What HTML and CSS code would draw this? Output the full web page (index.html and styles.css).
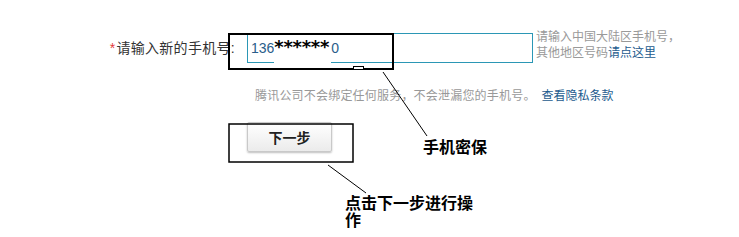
FILE: index.html
```html
<!DOCTYPE html>
<html lang="zh-CN">
<head>
    <meta charset="UTF-8">
    <title>设置密保手机</title>
    <link rel="stylesheet" href="styles.css">
</head>
<body>
    <div id="page">
        <div class="form-row">
            <div class="form-label"><span class="required">*</span>请输入新的手机号:</div>
            <div class="phone-input">
                <span class="phone-part">136</span>
                <span class="phone-mask">******</span>
                <span class="phone-part">0</span>
            </div>
            <div class="form-hint">
                请输入中国大陆区手机号，<br>
                其他地区号码<a href="#">请点这里</a>
            </div>
        </div>

        <div class="privacy-row">
            <span class="privacy-text">腾讯公司不会绑定任何服务，不会泄漏您的手机号。</span><a href="#">查看隐私条款</a>
        </div>

        <div class="button-row">
            <button class="btn-next">下一步</button>
        </div>

        <!-- 标注层 -->
        <svg class="notes" width="739" height="237" viewBox="0 0 739 237">
            <rect x="229" y="34" width="164" height="35" fill="none" stroke="#000" stroke-width="2"/>
            <rect x="353.5" y="66.5" width="10" height="3" fill="#fff" stroke="#000" stroke-width="1"/>
            <line x1="383" y1="72" x2="427" y2="136" stroke="#000" stroke-width="1"/>
            <rect x="229" y="124" width="124" height="38" fill="none" stroke="#000" stroke-width="1.5"/>
            <line x1="328" y1="165" x2="366" y2="193" stroke="#000" stroke-width="1"/>
        </svg>
        <div class="note-text note-phone">手机密保</div>
        <div class="note-text note-next">点击下一步进行操作</div>
    </div>
</body>
</html>
```

FILE: styles.css
```css
body {
    margin: 0;
    padding: 0;
    background: #fff;
    font-family: "Liberation Sans", "Noto Sans CJK SC", sans-serif;
    font-size: 12px;
    color: #333;
}

a {
    color: #1d5b8e;
    text-decoration: none;
}

#page {
    position: relative;
    width: 739px;
    height: 237px;
    padding-top: 33px;
    box-sizing: border-box;
    overflow: hidden;
}

.form-row {
    display: flex;
    align-items: flex-start;
}

.form-label {
    width: 235px;
    height: 30px;
    line-height: 30px;
    text-align: right;
    font-size: 14px;
    letter-spacing: 0.3px;
    color: #333;
    margin-right: 12px;
}

.required {
    color: #e4393c;
    margin-right: 1px;
}

.phone-input {
    display: flex;
    align-items: stretch;
    width: 286px;
    height: 30px;
    box-sizing: border-box;
    border: 1px solid #2b97b5;
    padding-left: 3px;
    font-size: 14px;
    line-height: 28px;
    color: #2a5d8a;
}

.phone-mask {
    width: 57px;
    margin-bottom: -1px;
    background: #fff;
    color: #000;
    font-family: "DejaVu Sans", sans-serif;
    font-weight: bold;
    font-size: 18px;
    line-height: 26px;
    letter-spacing: -0.3px;
}

.form-hint {
    margin-left: 3px;
    margin-top: -4px;
    line-height: 16px;
    color: #999;
}

.privacy-row {
    margin: 25px 0 0 255px;
    line-height: 16px;
    color: #999;
}

.privacy-text {
    letter-spacing: 0.2px;
}

.privacy-row a {
    margin-left: 6px;
}

.button-row {
    margin: 18px 0 0 247px;
}

.btn-next {
    width: 85px;
    height: 30px;
    border: 1px solid #c9c9c9;
    border-radius: 2px;
    background: linear-gradient(#ffffff, #ebebeb);
    box-shadow: 0 1px 2px rgba(0, 0, 0, 0.25);
    font-family: "Noto Sans CJK SC", sans-serif;
    font-size: 14px;
    font-weight: bold;
    color: #222;
    padding: 0;
}

.notes {
    position: absolute;
    top: 0;
    left: 0;
    pointer-events: none;
}

.note-text {
    position: absolute;
    font-family: "Noto Sans CJK SC", sans-serif;
    font-size: 16px;
    font-weight: bold;
    color: #000;
    line-height: 17px;
}

.note-phone {
    left: 423px;
    top: 138px;
}

.note-next {
    left: 345px;
    top: 194px;
    width: 136px;
}
```
